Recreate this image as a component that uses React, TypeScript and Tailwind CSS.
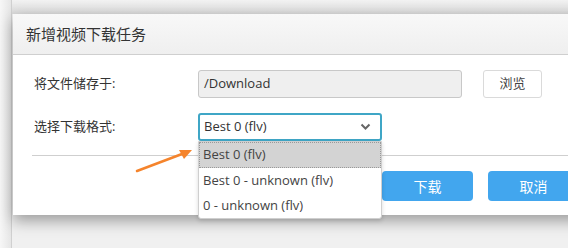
import React from "react";

const latin = "font-['Open_Sans','Noto_Sans_CJK_SC',sans-serif]";

export default function App() {
  return (
    <div className={`relative w-[568px] h-[248px] overflow-hidden bg-[#ededed] ${latin}`}>
      {/* background app */}
      <div className="absolute inset-0 flex">
        <div className="w-[12px] h-full bg-gradient-to-r from-[#f7f7f7] to-[#e6e6e6] border-r border-[#d0d0d0]" />
        <div className="flex-1 flex flex-col">
          <div className="h-[14px] bg-gradient-to-b from-[#f2f2f2] to-[#d9d9d9]" />
          <div className="flex-1 bg-[#f0f0f0]" />
        </div>
      </div>

      {/* dialog */}
      <div className="absolute left-[13px] top-[14px] w-[600px] h-[201px] bg-white shadow-[0_6px_14px_rgba(0,0,0,0.35)] flex flex-col">
        <div className="h-[41px] shrink-0 bg-gradient-to-b from-[#f8f8f8] to-[#efefef] border-b border-[#cfcfcf] flex items-center pl-[13px] text-[15px] text-[#333]">
          新增视频下载任务
        </div>
        <div className="flex flex-col pt-[15px] pl-[21px]">
          <div className="flex items-center h-[28px]">
            <div className="w-[164px] text-[13px] text-[#333]">将文件储存于:</div>
            <div className="w-[264px] h-[28px] rounded-[3px] border border-[#c8c8c8] bg-[#efefef] flex items-center pl-[5px] text-[13px] text-[#333]">
              /Download
            </div>
            <div className="ml-[21px] w-[59px] h-[28px] rounded-[3px] border border-[#dadada] bg-white flex items-center justify-center text-[13px] text-[#444]">
              浏览
            </div>
          </div>
          <div className="flex items-center h-[28px] mt-[15px]">
            <div className="w-[164px] text-[13px] text-[#333]">选择下载格式:</div>
            <div className="w-[184px] h-[28px] rounded-[3px] border-2 border-[#3fa6c6] bg-white flex items-center justify-between pl-[4px] pr-[9px] text-[13px] text-[#333]">
              <span>Best 0 (flv)</span>
              <svg width="11" height="8" viewBox="0 0 11 8">
                <path d="M1.5 1.5 L5.5 5.5 L9.5 1.5" fill="none" stroke="#666" strokeWidth="2" />
              </svg>
            </div>
          </div>
          <div className="mt-[14px] ml-[-2px] h-px bg-[#cfcfcf]" />
          <div className="flex mt-[15px] pl-[348px] gap-[15px]">
            <div className="w-[91px] h-[30px] rounded-[4px] bg-[#42a6ee] flex items-center justify-center text-[14px] text-white">下载</div>
            <div className="w-[91px] h-[30px] rounded-[4px] bg-[#42a6ee] flex items-center justify-center text-[14px] text-white">取消</div>
          </div>
        </div>
      </div>

      {/* dropdown list */}
      <div className="absolute left-[198px] top-[141px] w-[184px] bg-white border border-[#cfcfcf] rounded-b-[3px] shadow-[0_2px_4px_rgba(0,0,0,0.15)] flex flex-col text-[13px] text-[#444]">
        <div className="h-[26px] bg-[#d3d3d3] border border-dotted border-[#999] flex items-center pl-[3px]">Best 0 (flv)</div>
        <div className="h-[25px] flex items-center pl-[4px]">Best 0 - unknown (flv)</div>
        <div className="h-[25px] flex items-center pl-[4px]">0 - unknown (flv)</div>
      </div>

      {/* annotation arrow */}
      <svg className="absolute left-0 top-0 pointer-events-none" width="568" height="248">
        <line x1="137" y1="171" x2="182" y2="154" stroke="#f5842c" strokeWidth="2.5" strokeLinecap="round" />
        <path d="M192 150 L179 150 L184 159 Z" fill="#f5842c" />
      </svg>
    </div>
  );
}
